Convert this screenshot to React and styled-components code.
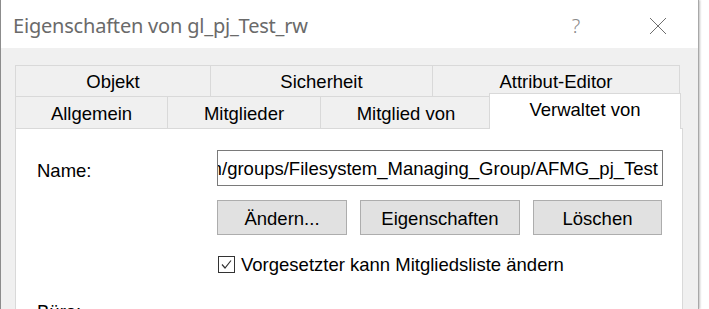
import React from "react";
import styled, { createGlobalStyle } from "styled-components";

const Global = createGlobalStyle`
  html, body {
    margin: 0;
    padding: 0;
    background: #ffffff;
    overflow: hidden;
  }
`;

const row1 = [
  { label: "Objekt", width: 196 },
  { label: "Sicherheit", width: 223 },
  { label: "Attribut-Editor", width: 248 },
];

const row2 = [
  { label: "Allgemein", width: 153 },
  { label: "Mitglieder", width: 154 },
  { label: "Mitglied von", width: 172 },
  { label: "Verwaltet von", width: 188, active: true },
];

export default function App() {
  return (
    <>
      <Global />
      <Window>
        <TitleBar>
          <Title>Eigenschaften von gl_pj_Test_rw</Title>
          <TitleButton>?</TitleButton>
          <CloseButton>
            <svg width="18" height="18" viewBox="0 0 18 18">
              <path d="M1 1 L17 17 M17 1 L1 17" stroke="#6e6e6e" strokeWidth="1" fill="none" />
            </svg>
          </CloseButton>
        </TitleBar>
        <Body>
          <TabRow>
            {row1.map((t) => (
              <Tab key={t.label} $w={t.width}>
                {t.label}
              </Tab>
            ))}
          </TabRow>
          <TabRow>
            {row2.map((t) =>
              t.active ? (
                <ActiveTab key={t.label} $w={t.width}>
                  {t.label}
                </ActiveTab>
              ) : (
                <Tab key={t.label} $w={t.width}>
                  {t.label}
                </Tab>
              )
            )}
          </TabRow>
          <Panel>
            <Label>Name:</Label>
            <Field>
              <FieldText>com/groups/Filesystem_Managing_Group/AFMG_pj_Test</FieldText>
            </Field>
            <Spacer />
            <Buttons>
              <Button $w={130}>Ändern...</Button>
              <Button $w={160}>Eigenschaften</Button>
              <Button $w={129}>Löschen</Button>
            </Buttons>
            <Spacer />
            <CheckRow>
              <Box>
                <svg width="13" height="13" viewBox="0 0 13 13">
                  <path d="M2 6.5 L5 10 L11 2.5" stroke="#333" strokeWidth="1.2" fill="none" />
                </svg>
              </Box>
              Vorgesetzter kann Mitgliedsliste ändern
            </CheckRow>
            <OfficeLabel>Büro:</OfficeLabel>
          </Panel>
        </Body>
      </Window>
    </>
  );
}

const Window = styled.div`
  width: 697px;
  height: 309px;
  overflow: hidden;
  border-left: 1px solid #8c8c8c;
  border-right: 1px solid #a8a8a8;
  box-shadow: 1px 0 2px rgba(0, 0, 0, 0.25);
  display: flex;
  flex-direction: column;
  background: #f0f0f0;
  font-family: "Liberation Sans", Arial, sans-serif;
  color: #000;
`;

const TitleBar = styled.div`
  height: 48px;
  flex: none;
  box-sizing: border-box;
  background: #ffffff;
  display: flex;
  align-items: center;
  padding-left: 12px;
  padding-top: 3px;
`;

const Title = styled.div`
  flex: 1;
  font-family: "Noto Sans", "Open Sans", sans-serif;
  font-size: 20px;
  color: #6a6a6a;
  letter-spacing: -0.2px;
`;

const TitleButton = styled.div`
  width: 30px;
  margin-right: 58px;
  text-align: center;
  font-family: "Noto Sans", sans-serif;
  font-size: 20px;
  font-weight: 300;
  color: #8a8a8a;
`;

const CloseButton = styled.div`
  width: 18px;
  margin-right: 31px;
  display: flex;
`;

const Body = styled.div`
  flex: 1;
  min-height: 0;
  padding: 17px 15px 0 14px;
  display: flex;
  flex-direction: column;
`;

const TabRow = styled.div`
  display: flex;
  flex: none;
  height: 31px;
  & + & {
    height: 32px;
  }
`;

const Tab = styled.div`
  width: ${(p) => p.$w}px;
  box-sizing: border-box;
  border: 1px solid #d9d9d9;
  border-bottom: none;
  margin-right: -1px;
  background: #f0f0f0;
  display: flex;
  align-items: center;
  justify-content: center;
  font-size: 18.5px;
  padding-top: 2px;
`;

const ActiveTab = styled(Tab)`
  position: relative;
  z-index: 2;
  width: ${(p) => p.$w + 4}px;
  margin-left: -2px;
  margin-right: -3px;
  margin-top: -3px;
  height: 36px;
  background: #ffffff;
  align-items: flex-start;
  padding-top: 5px;
`;

const Panel = styled.div`
  flex: 1;
  background: #ffffff;
  border: 1px solid #d9d9d9;
  border-bottom: none;
  padding: 21px 19px 0 21px;
  display: grid;
  grid-template-columns: 180px 1fr;
  grid-auto-rows: min-content;
  align-items: start;
  font-size: 18.5px;
  line-height: 21px;
`;

const Label = styled.div`
  padding-top: 10px;
`;

const Field = styled.div`
  height: 36px;
  box-sizing: border-box;
  border: 1px solid #7a7a7a;
  display: flex;
  align-items: center;
  justify-content: flex-end;
  overflow: hidden;
  padding-right: 4px;
  padding-top: 1px;
`;

const FieldText = styled.span`
  white-space: nowrap;
  flex: none;
`;

const Spacer = styled.div``;

const Buttons = styled.div`
  display: flex;
  gap: 13px;
  margin-top: 14px;
`;

const Button = styled.div`
  width: ${(p) => p.$w}px;
  height: 35px;
  box-sizing: border-box;
  border: 1px solid #adadad;
  background: #e1e1e1;
  display: flex;
  align-items: center;
  justify-content: center;
  padding-top: 1px;
`;

const CheckRow = styled.div`
  display: flex;
  align-items: center;
  gap: 6px;
  margin-top: 19px;
  margin-left: 1px;
`;

const Box = styled.div`
  width: 17px;
  height: 17px;
  box-sizing: border-box;
  border: 1px solid #333;
  display: flex;
  align-items: center;
  justify-content: center;
  background: #fff;
`;

const OfficeLabel = styled.div`
  grid-column: 1 / -1;
  margin-top: 26px;
`;
